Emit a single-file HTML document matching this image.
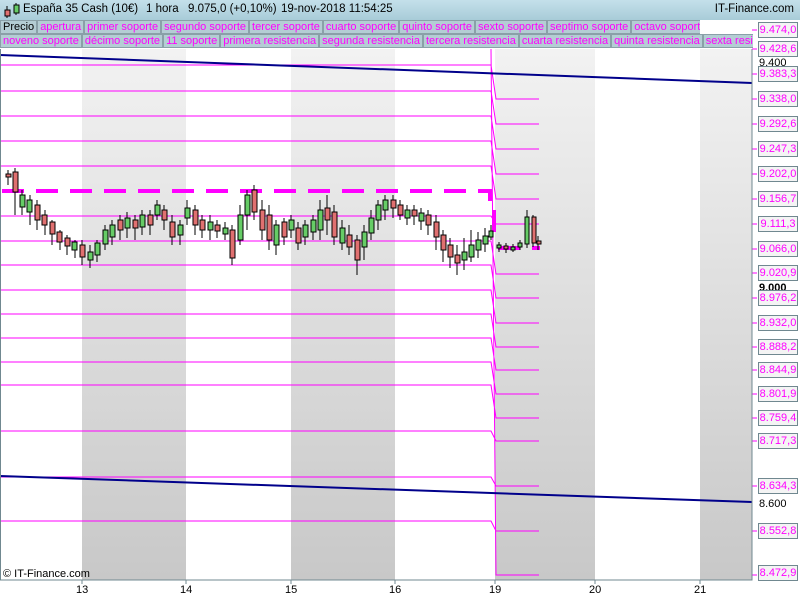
<!DOCTYPE html>
<html><head><meta charset="utf-8"><style>
body{margin:0;width:800px;height:600px;overflow:hidden;background:#fff;font-family:"Liberation Sans",sans-serif;position:relative}
.hdr{position:absolute;left:0;top:0;width:800px;height:20px;background:linear-gradient(#c4e0ea,#a8ccd8);font-size:11.5px;color:#000}
.hdr span{position:absolute;top:3px;white-space:nowrap}
.leg{position:absolute;left:0;height:14px;display:flex;font-size:11px;white-space:nowrap;overflow:hidden}
.leg span{background:#b4cdd4;color:#f0f;border:1px solid #8aa0a8;padding:0 2px;line-height:12px;margin-right:0}
.ax{position:absolute;left:758px;width:38px;height:14px;border:1px solid #708890;background:#f4f4f4;color:#f0f;font-size:11px;line-height:14px;text-align:center}
.axp{position:absolute;left:759px;font-size:11px;color:#000}
.xl{position:absolute;top:584px;font-size:11px;color:#000}
</style></head><body>
<svg width="800" height="600" style="position:absolute;left:0;top:0">
<defs><linearGradient id="g" x1="0" y1="0" x2="0" y2="1"><stop offset="0" stop-color="#f2f2f2"/><stop offset="1" stop-color="#c8c8c8"/></linearGradient></defs>
<rect x="82" y="49" width="104" height="531" fill="url(#g)"/>
<rect x="291" y="49" width="104" height="531" fill="url(#g)"/>
<rect x="495" y="49" width="100" height="531" fill="url(#g)"/>
<rect x="700" y="49" width="52" height="531" fill="url(#g)"/>
<g stroke="#f0f" stroke-width="1" fill="none">
<path d="M0 65H491L496 99H539M0 91H491L496 124H539M0 116H491L496 149H539M0 141H491L496 174H539M0 166H491L496 199H539M0 216H491L496 224H539M0 241H491L496 274H539M0 265H491L496 298H539M0 290H491L496 323H539M0 314H491L496 347H539M0 338H491L496 370H539M0 362H491L496 394H539M0 385H491L496 418H539M0 431H491L496 441H539M0 477H491L496 486H539M0 521H491L496 531H539M491 49L496 575H539"/>
<path d="M752 30h5M752 49h5M752 74h5M752 99h5M752 124h5M752 149h5M752 174h5M752 199h5M752 224h5M752 249h5M752 273h5M752 298h5M752 323h5M752 347h5M752 370h5M752 394h5M752 418h5M752 441h5M752 486h5M752 531h5M752 575h5"/>
</g>
<path d="M2 191H490V202M494 210V235M498 248H540" stroke="#f0f" stroke-width="4" stroke-dasharray="22 12" fill="none"/>
<path d="M0 55L752 83M0 476L752 502" stroke="#00008b" stroke-width="2"/>
<g stroke="#000" stroke-width="1">
<path d="M8 170V185M15 168V215M22 190V215M30 195V225M37 200V230M45 210V235M52 220V245M60 230V250M67 235V255M75 240V258M82 240V265M90 245V268M97 240V262M105 225V250M112 220V245M120 215V240M127 212V238M135 215V240M142 210V235M150 210V235M157 200V220M164 205V230M172 215V245M180 220V245M187 200V225M195 205V235M202 215V238M210 215V240M217 220V238M225 222V240M232 225V265M240 205V245M247 190V230M254 185V220M262 200V240M269 205V250M276 220V255M284 218V245M291 215V238M298 222V250M305 220V245M313 215V240M320 200V240M327 195V235M334 205V245M342 220V250M349 225V255M357 235V275M364 225V260M371 210V240M378 200V230M385 195V220M393 195V218M400 200V220M407 205V225M414 205V225M421 208V230M428 210V235M436 215V250M443 230V262M450 238V268M457 245V275M464 238V270M471 230V262M478 232V258M485 228V252M491 225V240M499 242V252M506 243V253M513 244V252M520 240V250M527 210V248M533 215V247M538 236V250"/>
</g>
<g stroke="#000" stroke-width="1">
<rect x="6" y="174" width="5" height="3" fill="#e07070"/><rect x="13" y="172" width="5" height="20" fill="#e07070"/><rect x="20" y="195" width="5" height="12" fill="#6c6"/><rect x="27" y="200" width="5" height="12" fill="#6c6"/><rect x="35" y="205" width="5" height="15" fill="#e07070"/><rect x="42" y="215" width="5" height="10" fill="#e07070"/><rect x="50" y="222" width="5" height="12" fill="#e07070"/><rect x="57" y="232" width="5" height="10" fill="#e07070"/><rect x="65" y="238" width="5" height="8" fill="#e07070"/><rect x="72" y="242" width="5" height="8" fill="#6c6"/><rect x="80" y="245" width="5" height="12" fill="#e07070"/><rect x="88" y="252" width="5" height="8" fill="#6c6"/><rect x="95" y="243" width="5" height="12" fill="#6c6"/><rect x="103" y="230" width="5" height="14" fill="#6c6"/><rect x="110" y="225" width="5" height="12" fill="#6c6"/><rect x="118" y="220" width="5" height="10" fill="#e07070"/><rect x="125" y="218" width="5" height="10" fill="#6c6"/><rect x="133" y="220" width="5" height="8" fill="#e07070"/><rect x="140" y="215" width="5" height="12" fill="#6c6"/><rect x="148" y="215" width="5" height="10" fill="#e07070"/><rect x="155" y="205" width="5" height="10" fill="#6c6"/><rect x="162" y="210" width="5" height="10" fill="#e07070"/><rect x="170" y="222" width="5" height="15" fill="#e07070"/><rect x="178" y="225" width="5" height="10" fill="#6c6"/><rect x="185" y="208" width="5" height="10" fill="#6c6"/><rect x="193" y="210" width="5" height="15" fill="#e07070"/><rect x="200" y="220" width="5" height="10" fill="#e07070"/><rect x="208" y="222" width="5" height="8" fill="#6c6"/><rect x="215" y="225" width="5" height="6" fill="#e07070"/><rect x="223" y="228" width="5" height="6" fill="#6c6"/><rect x="230" y="230" width="5" height="28" fill="#e07070"/><rect x="238" y="215" width="5" height="25" fill="#6c6"/><rect x="245" y="195" width="5" height="20" fill="#6c6"/><rect x="252" y="190" width="5" height="22" fill="#e07070"/><rect x="260" y="210" width="5" height="20" fill="#e07070"/><rect x="267" y="215" width="5" height="25" fill="#e07070"/><rect x="274" y="225" width="5" height="20" fill="#6c6"/><rect x="282" y="222" width="5" height="15" fill="#e07070"/><rect x="289" y="220" width="5" height="10" fill="#6c6"/><rect x="296" y="228" width="5" height="15" fill="#e07070"/><rect x="303" y="225" width="5" height="12" fill="#6c6"/><rect x="311" y="220" width="5" height="12" fill="#6c6"/><rect x="318" y="210" width="5" height="20" fill="#6c6"/><rect x="325" y="208" width="5" height="12" fill="#e07070"/><rect x="332" y="212" width="5" height="25" fill="#e07070"/><rect x="340" y="228" width="5" height="15" fill="#6c6"/><rect x="347" y="235" width="5" height="12" fill="#e07070"/><rect x="355" y="240" width="5" height="20" fill="#e07070"/><rect x="362" y="232" width="5" height="15" fill="#6c6"/><rect x="369" y="218" width="5" height="15" fill="#6c6"/><rect x="376" y="205" width="5" height="15" fill="#6c6"/><rect x="383" y="200" width="5" height="10" fill="#6c6"/><rect x="391" y="200" width="5" height="8" fill="#e07070"/><rect x="398" y="205" width="5" height="10" fill="#e07070"/><rect x="405" y="210" width="5" height="8" fill="#6c6"/><rect x="412" y="210" width="5" height="6" fill="#e07070"/><rect x="419" y="213" width="5" height="8" fill="#6c6"/><rect x="426" y="215" width="5" height="10" fill="#e07070"/><rect x="434" y="222" width="5" height="15" fill="#e07070"/><rect x="441" y="235" width="5" height="15" fill="#e07070"/><rect x="448" y="245" width="5" height="12" fill="#e07070"/><rect x="455" y="255" width="5" height="8" fill="#e07070"/><rect x="462" y="252" width="5" height="8" fill="#6c6"/><rect x="469" y="245" width="5" height="12" fill="#6c6"/><rect x="476" y="240" width="5" height="10" fill="#6c6"/><rect x="483" y="236" width="5" height="8" fill="#6c6"/><rect x="489" y="231" width="4" height="6" fill="#6c6"/>
<rect x="497" y="245" width="4" height="3" fill="#6c6"/><rect x="504" y="246" width="4" height="3" fill="#e07070"/><rect x="511" y="247" width="4" height="3" fill="#6c6"/><rect x="518" y="243" width="4" height="4" fill="#6c6"/><rect x="525" y="217" width="4" height="27" fill="#6c6"/><rect x="532" y="217" width="4" height="26" fill="#e07070"/><rect x="537" y="241" width="4" height="3" fill="#e07070"/>
</g>
<path d="M752 49V580H0" stroke="#708890" stroke-width="1" fill="none"/>
<path d="M0 49V580" stroke="#708890" stroke-width="2"/>
<path d="M82 580v4M186 580v4M291 580v4M395 580v4M495 580v4M595 580v4M700 580v4" stroke="#708890"/>
</svg>
<div class="hdr"><svg width="18" height="18" style="position:absolute;left:3px;top:1px"><path d="M4 5V17M13 2V14" stroke="#000"/><rect x="2" y="9" width="5" height="6" fill="#e07070" stroke="#000"/><rect x="11" y="4" width="5" height="8" fill="#6c6" stroke="#000"/></svg><span style="left:23px">España 35 Cash (10€)</span><span style="left:146px">1 hora</span><span style="left:188px">9.075,0 (+0,10%)</span><span style="left:281px">19-nov-2018 11:54:25</span><span style="right:6px">IT-Finance.com</span></div>
<div class="leg" style="top:20px;width:700px"><span style="color:#000">Precio</span><span>apertura</span><span>primer soporte</span><span>segundo soporte</span><span>tercer soporte</span><span>cuarto soporte</span><span>quinto soporte</span><span>sexto soporte</span><span>septimo soporte</span><span>octavo soporte</span></div>
<div class="leg" style="top:34px;width:753px"><span>noveno soporte</span><span>décimo soporte</span><span>11 soporte</span><span>primera resistencia</span><span>segunda resistencia</span><span>tercera resistencia</span><span>cuarta resistencia</span><span>quinta resistencia</span><span>sexta resistencia</span></div>
<div class="axp" style="top:57px">9.400</div>
<div class="axp" style="top:282px;font-weight:bold">9.000</div>
<div class="axp" style="top:498px">8.600</div>
<div class="ax" style="top:22px">9.474,0</div>
<div class="ax" style="top:41px">9.428,6</div>
<div class="ax" style="top:66px">9.383,3</div>
<div class="ax" style="top:91px">9.338,0</div>
<div class="ax" style="top:116px">9.292,6</div>
<div class="ax" style="top:141px">9.247,3</div>
<div class="ax" style="top:166px">9.202,0</div>
<div class="ax" style="top:191px">9.156,7</div>
<div class="ax" style="top:216px">9.111,3</div>
<div class="ax" style="top:241px">9.066,0</div>
<div class="ax" style="top:265px">9.020,9</div>
<div class="ax" style="top:290px">8.976,2</div>
<div class="ax" style="top:315px">8.932,0</div>
<div class="ax" style="top:339px">8.888,2</div>
<div class="ax" style="top:362px">8.844,9</div>
<div class="ax" style="top:386px">8.801,9</div>
<div class="ax" style="top:410px">8.759,4</div>
<div class="ax" style="top:433px">8.717,3</div>
<div class="ax" style="top:478px">8.634,3</div>
<div class="ax" style="top:523px">8.552,8</div>
<div class="ax" style="top:565px">8.472,9</div>
<div style="position:absolute;left:3px;top:568px;font-size:11px">© IT-Finance.com</div>
<div class="xl" style="left:76px">13</div><div class="xl" style="left:180px">14</div><div class="xl" style="left:285px">15</div><div class="xl" style="left:389px">16</div><div class="xl" style="left:489px">19</div><div class="xl" style="left:589px">20</div><div class="xl" style="left:694px">21</div>
</body></html>
